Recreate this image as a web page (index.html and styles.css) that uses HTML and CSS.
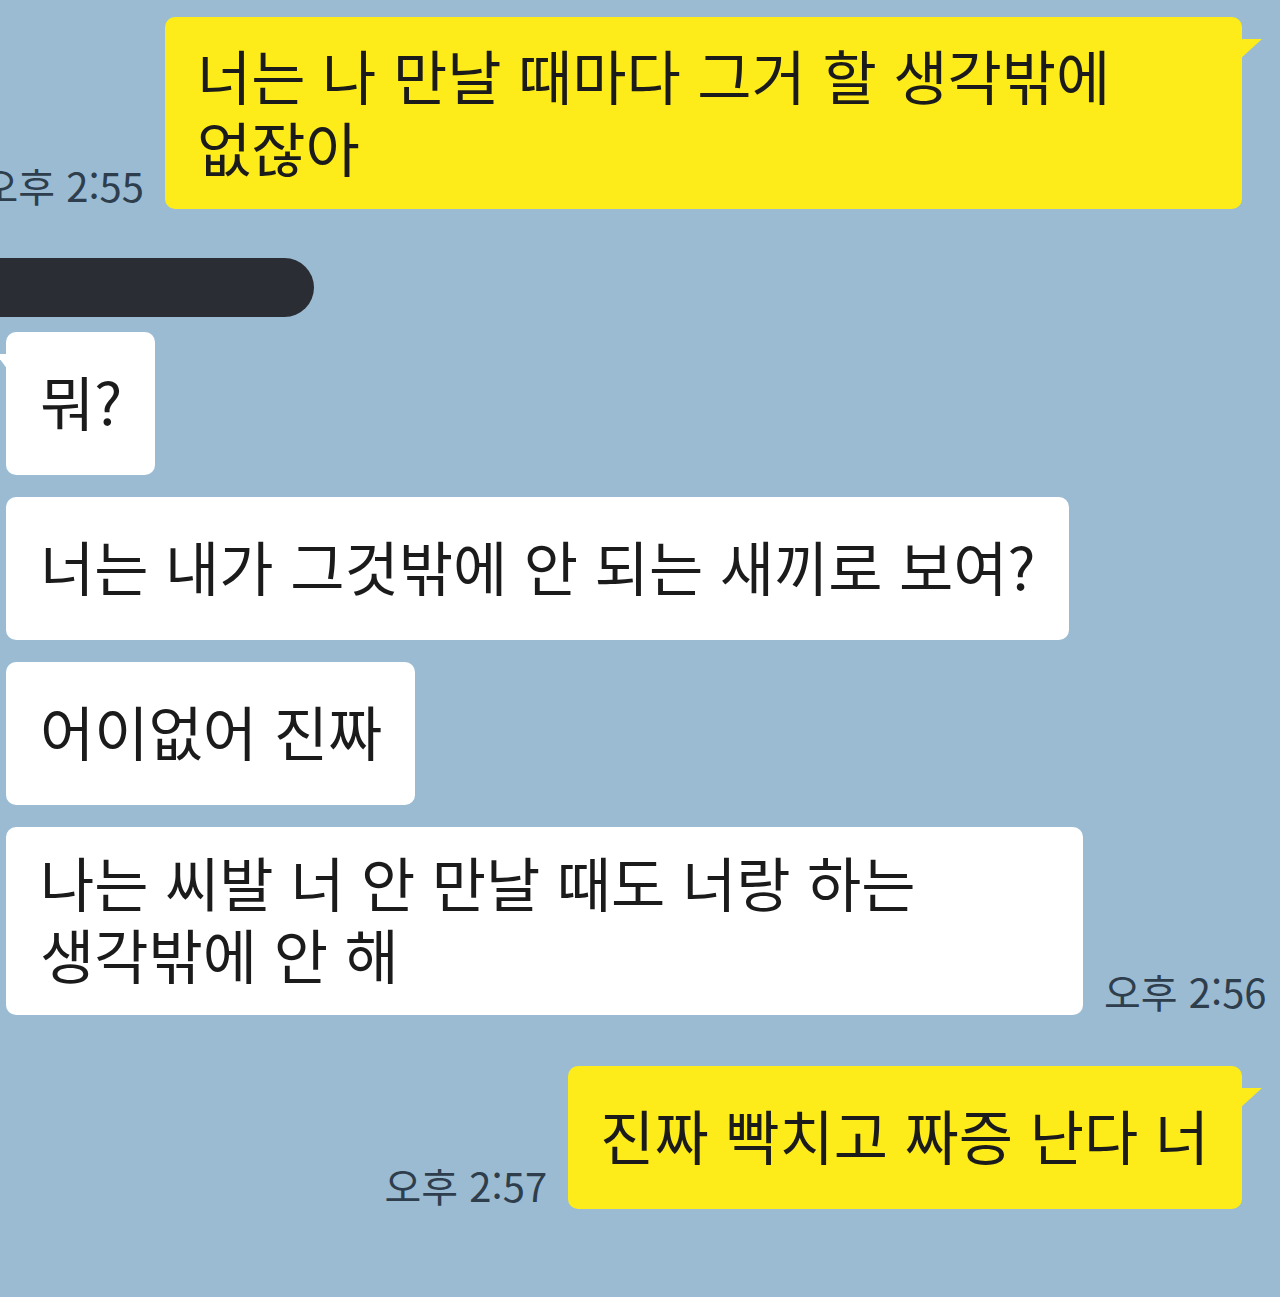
FILE: index.html
```html
<!DOCTYPE html>
<html lang="ko">
<head>
    <meta charset="UTF-8">
    <meta name="viewport" content="width=device-width, initial-scale=1.0">
    <title>채팅</title>
    <link rel="stylesheet" href="styles.css">
</head>
<body>
    <div class="chat">
        <div class="row mine first">
            <span class="time">오후 2:55</span>
            <div class="bubble yellow tail w-1">너는 나 만날 때마다 그거 할 생각밖에<br>없잖아</div>
        </div>

        <div class="name-bar"></div>

        <div class="row theirs">
            <div class="bubble white tail">뭐?</div>
        </div>
        <div class="row theirs">
            <div class="bubble white">너는 내가 그것밖에 안 되는 새끼로 보여?</div>
        </div>
        <div class="row theirs">
            <div class="bubble white">어이없어 진짜</div>
        </div>
        <div class="row theirs">
            <div class="bubble white w-4">나는 씨발 너 안 만날 때도 너랑 하는<br>생각밖에 안 해</div>
            <span class="time">오후 2:56</span>
        </div>

        <div class="row mine last">
            <span class="time">오후 2:57</span>
            <div class="bubble yellow tail">진짜 빡치고 짜증 난다 너</div>
        </div>
    </div>
</body>
</html>
```

FILE: styles.css
```css
* {
    margin: 0;
    padding: 0;
    box-sizing: border-box;
}

html, body {
    height: 100%;
}

body {
    font-family: "Noto Sans CJK KR", "Noto Sans", sans-serif;
    background: #9bbbd3;
    color: #1b1b1b;
    overflow: hidden;
}

.chat {
    display: flex;
    flex-direction: column;
    padding: 17px 38px 0 6px;
}

.row {
    display: flex;
    align-items: flex-end;
    gap: 21px;
    margin-bottom: 22px;
}

.row.mine {
    justify-content: flex-end;
}

.row.first {
    margin-bottom: 49px;
}

.row.last {
    margin-top: 29px;
}

.time {
    flex-shrink: 0;
    font-size: 40px;
    line-height: 1;
    color: #2e3e4c;
    padding-bottom: 4px;
    white-space: nowrap;
}

.bubble {
    position: relative;
    flex-shrink: 0;
    font-size: 59px;
    line-height: 72px;
    white-space: nowrap;
    border-radius: 10px;
    padding: 33px 33px 38px 34px;
}

.bubble.yellow {
    background: #fdec19;
    padding-left: 32px;
}

.bubble.white {
    background: #ffffff;
}

.w-1 {
    width: 1077px;
    padding-top: 22px;
    padding-bottom: 26px;
}

.w-4 {
    width: 1077px;
    padding-top: 19px;
    padding-bottom: 25px;
}

.bubble.yellow.tail::after {
    content: "";
    position: absolute;
    top: 22px;
    right: -20px;
    border-left: 22px solid #fdec19;
    border-bottom: 20px solid transparent;
}

.bubble.white.tail::after {
    content: "";
    position: absolute;
    top: 22px;
    left: -10px;
    border-right: 12px solid #ffffff;
    border-bottom: 16px solid transparent;
}

.name-bar {
    width: 314px;
    height: 59px;
    margin-left: -6px;
    margin-bottom: 15px;
    background: #2a2e34;
    border-radius: 0 30px 30px 0;
}
```
